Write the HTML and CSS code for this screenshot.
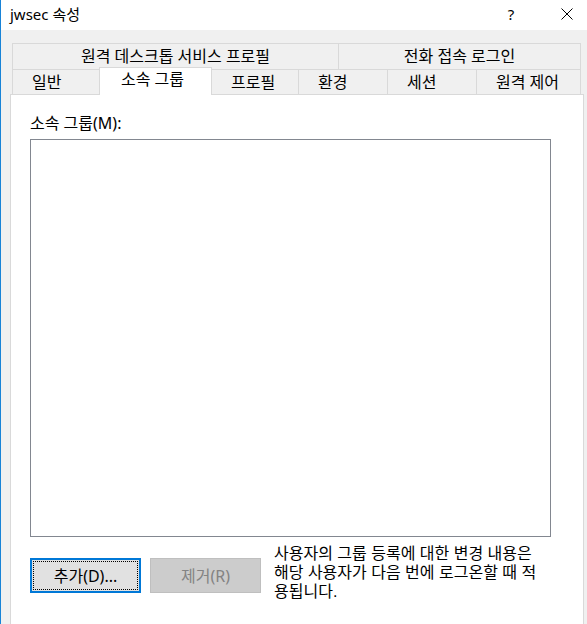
FILE: index.html
```html
<!DOCTYPE html>
<html lang="ko">
<head>
<meta charset="utf-8">
<title>jwsec 속성</title>
<link rel="stylesheet" href="styles.css">
</head>
<body>
<div class="window">
  <div class="titlebar">
    <span class="title">jwsec 속성</span>
    <span class="help">?</span>
    <svg class="close" width="12" height="12" viewBox="0 0 12 12"><path d="M0.5 0.5 L11.5 11.5 M11.5 0.5 L0.5 11.5" stroke="#000" stroke-width="1" fill="none"/></svg>
  </div>
  <div class="body">
    <div class="tabctl">
      <div class="tabrow row1">
        <div class="tab">원격 데스크톱 서비스 프로필</div>
        <div class="tab last">전화 접속 로그인</div>
      </div>
      <div class="tabrow row2">
        <div class="tab">일반</div>
        <div class="tab selected">소속 그룹</div>
        <div class="tab">프로필</div>
        <div class="tab">환경</div>
        <div class="tab">세션</div>
        <div class="tab last">원격 제어</div>
      </div>
      <div class="panel">
        <div class="label">소속 그룹(M):</div>
        <div class="listbox"></div>
        <div class="actions">
          <button class="btn default">추가(D)...</button>
          <button class="btn disabled" disabled>제거(R)</button>
          <div class="note">
            <div class="note-line">사용자의 그룹 등록에 대한 변경 내용은</div>
            <div class="note-line">해당 사용자가 다음 번에 로그온할 때 적</div>
            <div class="note-line">용됩니다.</div>
          </div>
        </div>
      </div>
    </div>
  </div>
</div>
</body>
</html>
```
FILE: styles.css
```css
* { box-sizing: border-box; }
html, body { margin: 0; padding: 0; }
body {
  width: 587px;
  height: 624px;
  overflow: hidden;
  font-family: "Noto Sans", "Noto Sans CJK KR", sans-serif;
  font-size: 16px;
  color: #000;
  background: #f0f0f0;
}
.window {
  height: 624px;
  border-left: 1px solid #1883d7;
  display: flex;
  flex-direction: column;
  overflow: hidden;
}
.titlebar {
  height: 30px;
  flex: none;
  background: #fff;
  display: flex;
  align-items: center;
  padding: 0 14px 3px 9px;
  font-size: 15px;
}
.title { flex: 1; line-height: 20px; }
.help {
  width: 20px;
  text-align: center;
  margin-right: 40px;
  line-height: 20px;
}
.close { display: block; flex: none; }
.body {
  flex: 1;
  background: #f0f0f0;
  padding: 13px 0 0 9px;
}
.tabctl { width: 574px; }
.tabrow {
  display: grid;
  margin: 0 3px 0 2px;
}
.row1 { grid-template-columns: 326px 1fr; height: 26px; }
.row2 { grid-template-columns: 87px 113px 86px 89px 89px 1fr; height: 25px; }
.tab {
  background: #f0f0f0;
  border-top: 1px solid #d9d9d9;
  border-left: 1px solid #d9d9d9;
  white-space: nowrap;
}
.tab.last { border-right: 1px solid #d9d9d9; }
.row1 .tab { text-align: center; line-height: 25px; }
.row2 .tab { padding-left: 19px; line-height: 24px; }
.row2 .tab.selected {
  position: relative;
  z-index: 1;
  background: #fff;
  border-right: 1px solid #d9d9d9;
  margin: -2px 0 -1px 0;
  line-height: 22px;
  padding-left: 21px;
}
.row2 .tab.selected + .tab { border-left: none; }
.panel {
  height: 560px;
  background: #fff;
  border: 1px solid #d9d9d9;
  padding: 18px 0 0 19px;
}
.label { line-height: 20px; }
.listbox {
  margin-top: 6px;
  width: 521px;
  height: 398px;
  border: 1px solid #828790;
  background: #fff;
}
.actions {
  display: flex;
  align-items: flex-start;
  margin-top: 7px;
}
.btn {
  font: inherit;
  width: 111px;
  height: 35px;
  margin-top: 14px;
  padding: 0;
  line-height: 20px;
  color: #000;
}
.btn.default {
  background: #e1e1e1;
  border: 2px solid #0078d7;
  outline: 1px dotted #000;
  outline-offset: -4px;
}
.btn.disabled {
  margin-left: 9px;
  background: #cccccc;
  border: 1px solid #bfbfbf;
  color: #838383;
}
.note {
  margin: 0 0 0 13px;
  font-family: "Liberation Sans", "Noto Sans CJK KR", sans-serif;
}
.note-line {
  line-height: 19px;
  white-space: nowrap;
}
```
